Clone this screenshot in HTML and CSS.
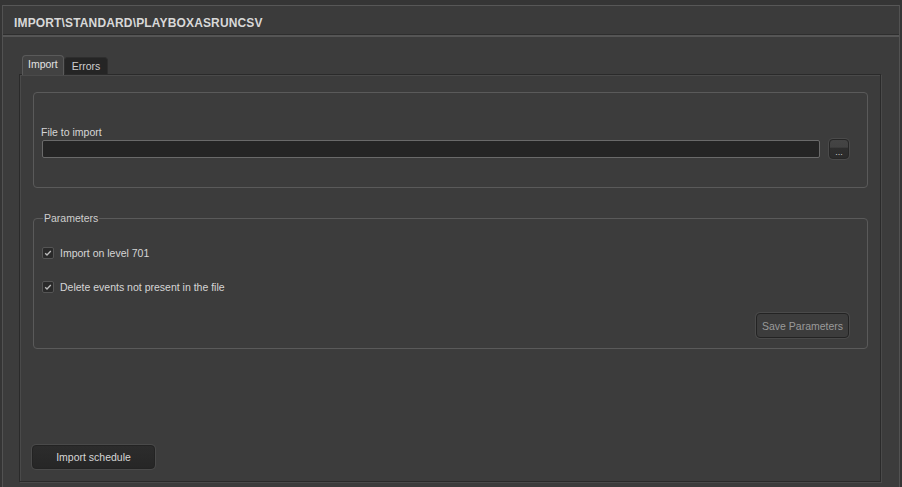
FILE: index.html
```html
<!DOCTYPE html>
<html>
<head>
<meta charset="utf-8">
<link rel="stylesheet" href="styles.css">
</head>
<body>
<div class="window">
  <div class="titlebar">IMPORT\STANDARD\PLAYBOXASRUNCSV</div>
  <div class="content">
    <div class="tabs">
      <div class="tab active">Import</div>
      <div class="tab">Errors</div>
    </div>
    <div class="pane">
      <div class="group file-group">
        <div class="label">File to import</div>
        <div class="file-row">
          <div class="input"></div>
          <div class="browse"><span>...</span></div>
        </div>
      </div>
      <fieldset class="params">
        <legend>Parameters</legend>
        <div class="check-row">
          <span class="checkbox"><svg width="8" height="8" viewBox="0 0 8 8"><path d="M1.2 4.2 L3 6 L6.8 2" fill="none" stroke="#bdbdbd" stroke-width="1.3"/></svg></span>
          <span class="check-label">Import on level 701</span>
        </div>
        <div class="check-row">
          <span class="checkbox"><svg width="8" height="8" viewBox="0 0 8 8"><path d="M1.2 4.2 L3 6 L6.8 2" fill="none" stroke="#bdbdbd" stroke-width="1.3"/></svg></span>
          <span class="check-label">Delete events not present in the file</span>
        </div>
        <div class="save-row">
          <div class="btn save">Save Parameters</div>
        </div>
      </fieldset>
      <div class="spacer"></div>
      <div class="btn import">Import schedule</div>
    </div>
  </div>
</div>
</body>
</html>
```
FILE: styles.css
```css
html, body {
  margin: 0;
  padding: 0;
  width: 902px;
  height: 487px;
  overflow: hidden;
  background: #353535;
  font-family: "Liberation Sans", Arial, sans-serif;
  font-size: 10.5px;
  color: #d6d6d6;
}
.window {
  margin: 5px 2px 0 2px;
  height: 482px;
  box-sizing: border-box;
  border-top: 1px solid #575757;
  border-left: 1px solid #525252;
  border-right: 1px solid #525252;
  background: #3c3c3c;
  display: flex;
  flex-direction: column;
}
.titlebar {
  height: 31px;
  box-sizing: border-box;
  border-bottom: 2px solid #555;
  box-shadow: inset 0 -1px 0 #2e2e2e;
  padding: 10px 0 0 11px;
  font-weight: bold;
  font-size: 12px;
  letter-spacing: 0.15px;
  color: #d8d8d8;
  background: #3b3b3b;
}
.content {
  flex: 1;
  display: flex;
  flex-direction: column;
  padding: 17px 18px 5px 16px;
}
.tabs {
  display: flex;
  align-items: flex-end;
  padding-left: 3px;
  height: 20px;
}
.tab {
  height: 17px;
  box-sizing: border-box;
  padding: 2px 7px 0 7px;
  background: #252525;
  border: 1px solid #2e2e2e;
  border-bottom: none;
  border-radius: 4px 4px 0 0;
  color: #cfcfcf;
}
.tab.active {
  height: 20px;
  padding: 2px 5px 0 5px;
  background: #424242;
  border-color: #5a5a5a;
  color: #e2e2e2;
  position: relative;
  z-index: 1;
  margin-bottom: -1px;
}
.pane {
  flex: 1;
  display: flex;
  flex-direction: column;
  border: 1px solid #2a2a2a;
  box-shadow: inset 1px 1px 0 #4a4a4a, 1px 1px 0 #4a4a4a;
  padding: 17px 12px 12px 13px;
  background: #3c3c3c;
}
.group {
  border: 1px solid #5a5a5a;
  border-radius: 4px;
}
.file-group {
  height: 96px;
  box-sizing: border-box;
  padding: 33px 18px 0 7px;
}
.label {
  height: 13px;
  line-height: 13px;
  color: #d6d6d6;
}
.file-row {
  display: flex;
  align-items: center;
  gap: 9px;
  padding-left: 1px;
}
.input {
  flex: 1;
  height: 18px;
  box-sizing: border-box;
  background: #252525;
  border: 1px solid #6a6a6a;
  border-radius: 2px;
}
.browse {
  width: 20px;
  height: 20px;
  box-sizing: border-box;
  border: 1px solid #262626;
  border-radius: 4px;
  background: linear-gradient(#444 0, #424242 40%, #2e2e2e 45%, #2b2b2b 100%);
  box-shadow: 0 0 0 1px #4a4a4a;
  display: flex;
  justify-content: center;
  align-items: flex-end;
  color: #cfcfcf;
  font-size: 9px;
  line-height: 12px;
}
.params {
  margin: 24px 0 0 0;
  padding: 10px 18px 10px 8px;
  border: 1px solid #5a5a5a;
  border-radius: 4px;
  min-width: 0;
  height: 137px;
  box-sizing: border-box;
}
.params legend {
  padding: 0 1px;
  margin-left: 1px;
  line-height: 13px;
  color: #cfcfcf;
}
.check-row {
  display: flex;
  align-items: center;
  gap: 6px;
  height: 12px;
  margin-top: 12px;
}
.check-row + .check-row {
  margin-top: 22px;
}
.checkbox {
  width: 12px;
  height: 12px;
  box-sizing: border-box;
  border: 1px solid #555;
  border-radius: 2px;
  background: #2a2a2a;
  display: flex;
  justify-content: center;
  align-items: center;
}
.check-label {
  color: #d6d6d6;
  line-height: 13px;
}
.save-row {
  display: flex;
  justify-content: flex-end;
  margin-top: 20px;
}
.btn {
  box-sizing: border-box;
  border: 1px solid #232323;
  border-radius: 4px;
  box-shadow: 0 0 0 1px #4a4a4a;
  display: flex;
  justify-content: center;
  align-items: center;
}
.save {
  width: 93px;
  height: 25px;
  background: #3c3c3c;
  color: #9a9a9a;
}
.spacer {
  flex: 1;
}
.import {
  width: 123px;
  height: 24px;
  margin-left: -1px;
  background: linear-gradient(#2c2c2c, #262626);
  color: #d6d6d6;
}
```
